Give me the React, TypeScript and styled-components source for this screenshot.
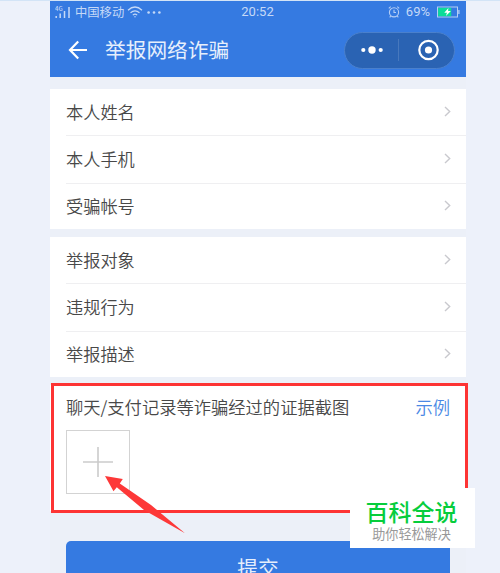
import styled, { createGlobalStyle } from 'styled-components';

const profileRows = ['本人姓名', '本人手机', '受骗帐号'];
const reportRows = ['举报对象', '违规行为', '举报描述'];

export default function App() {
  return (
    <>
      <GlobalStyle />
      <Page>
        <Phone>
          <Header>
            <StatusBar>
              <StatusLeft>
                <SignalIcon />
                <Carrier>中国移动</Carrier>
                <WifiIcon />
                <MoreDots />
              </StatusLeft>
              <Clock>20:52</Clock>
              <StatusRight>
                <AlarmIcon />
                <span>69%</span>
                <BatteryIcon />
              </StatusRight>
            </StatusBar>
            <NavBar>
              <BackIcon />
              <NavTitle>举报网络诈骗</NavTitle>
              <Capsule>
                <CapsuleHalf>
                  <svg width="24" height="10" viewBox="0 0 24 10" fill="#fff">
                    <circle cx="3.3" cy="5" r="2.1" />
                    <circle cx="12" cy="5" r="3.7" />
                    <circle cx="20.7" cy="5" r="2.1" />
                  </svg>
                </CapsuleHalf>
                <CapsuleLine />
                <CapsuleHalf>
                  <svg width="22" height="22" viewBox="0 0 22 22">
                    <circle cx="11.5" cy="11" r="9.2" fill="none" stroke="#fff" strokeWidth="2.2" />
                    <circle cx="11.5" cy="11" r="3.6" fill="#fff" />
                  </svg>
                </CapsuleHalf>
              </Capsule>
            </NavBar>
          </Header>

          <Content>
            <FormGroup rows={profileRows} />
            <FormGroup rows={reportRows} />
            <Evidence>
              <EvidenceHead>
                <span>聊天/支付记录等诈骗经过的证据截图</span>
                <ExampleLink>示例</ExampleLink>
              </EvidenceHead>
              <UploadBox>
                <svg width="30" height="30" viewBox="0 0 30 30" stroke="#cbcbcb" strokeWidth="1.6">
                  <path d="M15 0v30M0 15h30" />
                </svg>
              </UploadBox>
            </Evidence>
            <SubmitButton>提交</SubmitButton>
          </Content>
        </Phone>

        <Highlight />
        <Pointer width="82" height="60" viewBox="0 0 82 60">
          <path d="M1 1L18.8 4L15.8 8.5L47 30L81 58.2L40 35L12.8 12.2L9.5 16.2Z" fill="#fd3838" />
        </Pointer>
        <Watermark>
          <WatermarkTitle>百科全说</WatermarkTitle>
          <WatermarkSub>助你轻松解决</WatermarkSub>
        </Watermark>
      </Page>
    </>
  );
}

function FormGroup({ rows }: { rows: string[] }) {
  return (
    <Group>
      {rows.map(label => (
        <Row key={label}>
          <span>{label}</span>
          <svg width="7" height="11" viewBox="0 0 7 11" fill="none" stroke="#c9c9ce" strokeWidth="1.4">
            <path d="M1 1l4.7 4.5L1 10" />
          </svg>
        </Row>
      ))}
    </Group>
  );
}

function SignalIcon() {
  return (
    <svg width="16" height="13" viewBox="0 0 16 13">
      <text x="0" y="4.8" fontSize="6" fontWeight="500" fill="#c5d9f7">4G</text>
      <path d="M1.2 10v2M5.2 7.5V12M9.5 5v7M14 1v11" stroke="#c5d9f7" strokeWidth="1.5" />
    </svg>
  );
}

function WifiIcon() {
  return (
    <svg width="16" height="12" viewBox="0 0 16 12" fill="none" stroke="#c5d9f7" strokeWidth="1.2">
      <path d="M1 4.3Q8-2.3 15 4.3M3.5 6.8q4.5-3.9 9 0M5.8 9.1q2.2-1.8 4.4 0" />
      <circle cx="8" cy="10.8" r="0.7" fill="#c5d9f7" stroke="none" />
    </svg>
  );
}

function MoreDots() {
  return (
    <svg width="14" height="3" viewBox="0 0 14 3" fill="#c5d9f7">
      <circle cx="1.6" cy="1.5" r="1.3" />
      <circle cx="7" cy="1.5" r="1.3" />
      <circle cx="12.4" cy="1.5" r="1.3" />
    </svg>
  );
}

function AlarmIcon() {
  return (
    <svg width="12" height="12" viewBox="0 0 12 12" fill="none" stroke="#b5cef4" strokeWidth="1.1">
      <circle cx="6" cy="6.3" r="4.6" />
      <path d="M6 3.7v2.8h2M.8 2.3L2.7.7M11.2 2.3L9.3.7M2.7 10l-1 1.3M9.3 10l1 1.3" />
    </svg>
  );
}

function BatteryIcon() {
  return (
    <svg width="24" height="12" viewBox="0 0 24 12">
      <rect x="1.5" y="1" width="20" height="10" fill="none" stroke="#b5cef4" />
      <rect x="2.2" y="1.8" width="13" height="8.4" fill="#0bdc98" />
      <path d="M22.9 4v4" stroke="#b5cef4" strokeWidth="1.3" />
      <path d="M12.4 2L8.3 6.7H11L9.9 10l5-4.9h-2.8z" fill="#fff" />
    </svg>
  );
}

function BackIcon() {
  return (
    <svg width="20" height="20" viewBox="0 0 20 20" fill="none" stroke="#fff" strokeWidth="2.2">
      <path d="M10.2 1.5L2 10l8.2 8.5M2 10h17" />
    </svg>
  );
}

const GlobalStyle = createGlobalStyle`
  * { box-sizing: border-box; }
  body {
    margin: 0;
    background: #edf1fa;
    font-family: 'Noto Sans CJK SC', sans-serif;
  }
  svg { display: block; flex-shrink: 0; }
`;

const Page = styled.div`
  position: relative;
  width: 500px;
  height: 573px;
  overflow: hidden;
  background: #edf1fa;
  border-top: 1px solid #d3e4f6;
`;

const Phone = styled.div`
  width: 416px;
  height: 572px;
  margin-left: 50px;
  background: #ecf0f8;
`;

const Header = styled.div`
  height: 76px;
  background: #357ae1;
`;

const StatusBar = styled.div`
  display: grid;
  grid-template-columns: 1fr auto 1fr;
  align-items: center;
  height: 22px;
  padding: 0 6px 0 5px;
  color: #c5d9f7;
  font-size: 12.3px;
  line-height: 22px;
`;

const StatusLeft = styled.div`
  display: flex;
  align-items: center;
  height: 20px;
`;

const Carrier = styled.span`
  margin: 0 3px 0 4px;

  & + svg + svg { margin-left: 4px; }
`;

const Clock = styled.span`
  font-family: Roboto, sans-serif;
  font-size: 13px;
`;

const StatusRight = styled.div`
  display: flex;
  align-items: center;
  justify-content: flex-end;
  gap: 6px;
  font-family: Roboto, sans-serif;
  font-size: 13px;
`;

const NavBar = styled.div`
  display: flex;
  align-items: center;
  height: 54px;
  padding: 0 11px 0 18px;
`;

const NavTitle = styled.div`
  flex: 1;
  margin-left: 17px;
  padding-bottom: 2px;
  color: #e6effc;
  font-size: 20.7px;
  line-height: 30px;
`;

const Capsule = styled.div`
  display: flex;
  align-items: center;
  width: 111px;
  height: 37px;
  border: 1px solid #4a80cc;
  border-radius: 19px;
  background: #2a63b3;
`;

const CapsuleHalf = styled.div`
  flex: 1;
  display: flex;
  justify-content: center;

  &:last-child { padding-left: 2px; }
`;

const CapsuleLine = styled.div`
  width: 1px;
  height: 22px;
  background: #4778bd;
`;

const Content = styled.div`
  padding-top: 12px;
`;

const Group = styled.div`
  height: 140px;
  margin-bottom: 8px;
  padding-left: 16px;
  background: #fff;
`;

const Row = styled.div`
  display: flex;
  align-items: center;
  justify-content: space-between;
  height: 47.4px;
  padding: 0 15px 2px 0;
  border-bottom: 1px solid #efeff1;
  color: #484848;
  font-size: 17.2px;
  font-weight: 350;

  &:last-child {
    height: 45.2px;
    padding-bottom: 1px;
    border-bottom: 0;
  }
`;

const Evidence = styled.div`
  height: 126px;
  padding: 10px 16px 0;
  background: #fff;
`;

const EvidenceHead = styled.div`
  display: flex;
  justify-content: space-between;
  color: #484848;
  font-size: 17.3px;
  font-weight: 350;
  line-height: 24px;
  white-space: nowrap;
`;

const ExampleLink = styled.span`
  color: #4a88e4;
`;

const UploadBox = styled.div`
  display: flex;
  align-items: center;
  justify-content: center;
  width: 64px;
  height: 64px;
  margin-top: 11px;
  border: 1px solid #d3d3d3;
`;

const SubmitButton = styled.div`
  height: 54px;
  margin: 30px 16px 0;
  border-radius: 5px;
  background: #357ae1;
  color: #e6effc;
  font-size: 20.7px;
  line-height: 52px;
  text-align: center;
`;

/* red frame drawn over the evidence card */
const Highlight = styled.div`
  position: absolute;
  left: 51px;
  top: 382px;
  width: 417px;
  height: 130px;
  border: 3px solid #fd3434;
`;

const Pointer = styled.svg`
  position: absolute;
  left: 104px;
  top: 474px;
`;

const Watermark = styled.div`
  position: absolute;
  left: 350px;
  top: 487px;
  width: 125px;
  height: 60px;
  padding-top: 10px;
  background: #fff;
  text-align: center;
  white-space: nowrap;
`;

const WatermarkTitle = styled.div`
  margin-right: 2px;
  color: #06cd3c;
  font-size: 23px;
  font-weight: 500;
  line-height: 26px;
`;

const WatermarkSub = styled.div`
  margin-right: 2px;
  color: #999;
  font-size: 13.1px;
  line-height: 19px;
`;
